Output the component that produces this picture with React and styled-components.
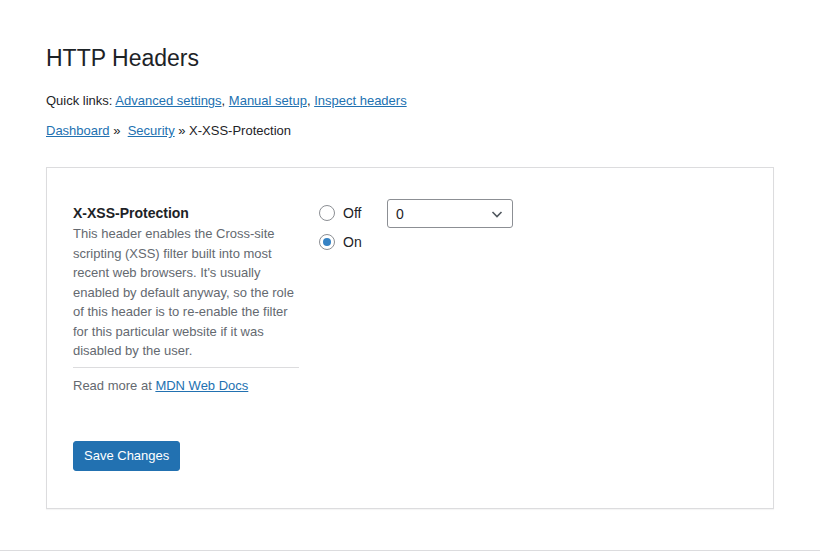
import React from "react";
import styled, { createGlobalStyle } from "styled-components";

const Global = createGlobalStyle`
  html, body {
    margin: 0;
    padding: 0;
    background: #fff;
  }
  body {
    font-family: "Liberation Sans", Arial, sans-serif;
    font-size: 13px;
    color: #1d2327;
  }
`;

const Page = styled.div`
  min-height: 551px;
  border-bottom: 1px solid #dcdcde;
  padding: 0 46px 0 46px;
  box-sizing: border-box;
`;

const Title = styled.h1`
  margin: 0;
  padding-top: 44px;
  font-size: 23px;
  font-weight: 400;
  line-height: 29px;
`;

const Line = styled.p`
  margin: 0;
  line-height: 19px;
  margin-top: ${(p) => p.$top}px;
`;

const Link = styled.a`
  color: #2271b1;
  text-decoration: underline;
  cursor: pointer;
`;

const Card = styled.div`
  margin-top: 27px;
  width: 728px;
  box-sizing: border-box;
  border: 1px solid #dcdcde;
  box-shadow: 0 1px 1px rgba(0, 0, 0, 0.04);
  padding: 36px 26px 37px;
`;

const Row = styled.div`
  display: flex;
  align-items: flex-start;
`;

const Info = styled.div`
  width: 226px;
`;

const Label = styled.div`
  font-size: 14px;
  font-weight: 700;
  line-height: 18px;
  margin-bottom: 2px;
`;

const Desc = styled.p`
  margin: 0;
  color: #646970;
  line-height: 19.5px;
  padding-bottom: 6px;
  border-bottom: 1px solid #dcdcde;
`;

const More = styled.p`
  margin: 9px 0 0;
  color: #646970;
  line-height: 17px;
`;

const Options = styled.div`
  margin-left: 20px;
  display: flex;
  flex-direction: column;
  gap: 11px;
  width: 48px;
`;

const Option = styled.label`
  display: flex;
  align-items: center;
  gap: 8px;
  font-size: 14px;
  line-height: 18px;
`;

const Radio = styled.span`
  width: 16px;
  height: 16px;
  box-sizing: border-box;
  border-radius: 50%;
  border: 1px solid #8c8f94;
  display: flex;
  align-items: center;
  justify-content: center;
  &::after {
    content: "";
    width: 8px;
    height: 8px;
    border-radius: 50%;
    background: ${(p) => (p.$checked ? "#3582c4" : "transparent")};
  }
`;

const Select = styled.div`
  margin-left: 20px;
  margin-top: -5px;
  width: 126px;
  height: 29px;
  box-sizing: border-box;
  border: 1px solid #8c8f94;
  border-radius: 3px;
  display: flex;
  align-items: center;
  justify-content: space-between;
  padding: 0 8px 0 8px;
  font-size: 14px;
`;

const Button = styled.button`
  margin-top: 47px;
  background: #2271b1;
  border: 1px solid #2271b1;
  border-radius: 3px;
  color: #fff;
  font-family: inherit;
  font-size: 13px;
  height: 30px;
  padding: 0 10px;
  cursor: pointer;
`;

export default function App() {
  return (
    <>
      <Global />
      <Page>
        <Title>HTTP Headers</Title>
        <Line $top={18}>
          Quick links: <Link>Advanced settings</Link>, <Link>Manual setup</Link>,{" "}
          <Link>Inspect headers</Link>
        </Line>
        <Line $top={11}>
          <Link>Dashboard</Link> »&nbsp; <Link>Security</Link> » X-XSS-Protection
        </Line>
        <Card>
          <Row>
            <Info>
              <Label>X-XSS-Protection</Label>
              <Desc>
                This header enables the Cross-site scripting (XSS) filter built into
                most recent web browsers. It's usually enabled by default anyway, so
                the role of this header is to re-enable the filter for this
                particular website if it was disabled by the user.
              </Desc>
              <More>
                Read more at <Link>MDN Web Docs</Link>
              </More>
            </Info>
            <Options>
              <Option>
                <Radio />
                Off
              </Option>
              <Option>
                <Radio $checked />
                On
              </Option>
            </Options>
            <Select>
              <span>0</span>
              <svg width="14" height="14" viewBox="0 0 14 14">
                <path d="M2.5 5l4.5 4.5L11.5 5" fill="none" stroke="#50575e" strokeWidth="1.6" />
              </svg>
            </Select>
          </Row>
          <Button>Save Changes</Button>
        </Card>
      </Page>
    </>
  );
}
